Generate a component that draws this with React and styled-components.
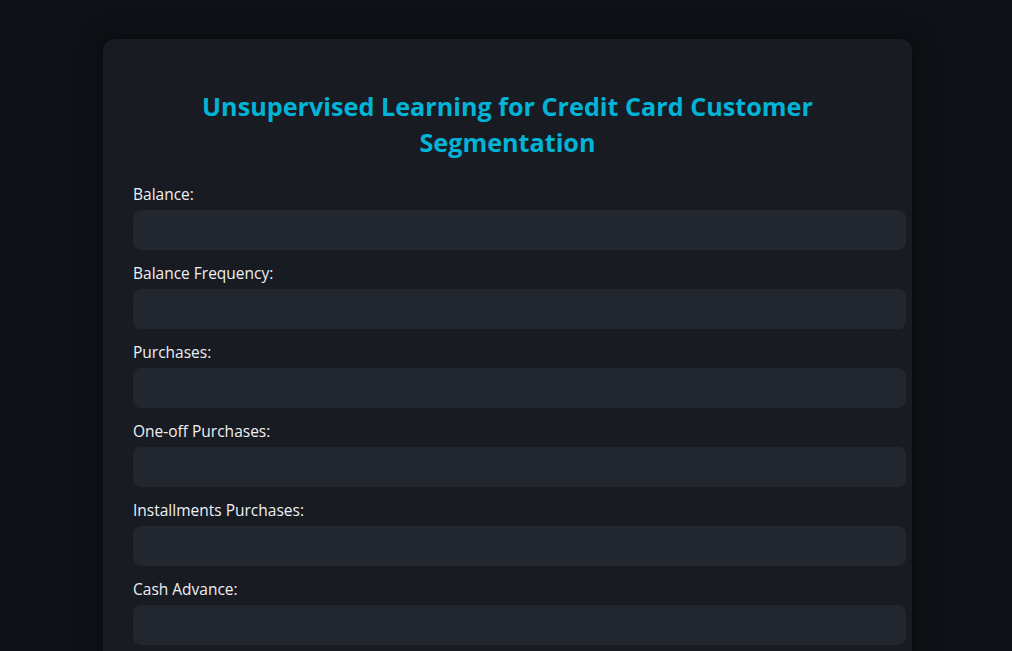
import React from 'react';
import styled, { createGlobalStyle } from 'styled-components';

const GlobalStyle = createGlobalStyle`
  html, body {
    margin: 0;
    padding: 0;
    background: #0f1117;
    font-family: 'Open Sans', 'Noto Sans', 'Liberation Sans', sans-serif;
  }
`;

const Page = styled.div`
  min-height: 100vh;
  padding: 39px 0 40px 3px;
  box-sizing: border-box;
`;

const Card = styled.div`
  width: 749px;
  margin: 0 auto;
  padding: 30px;
  background: #181b22;
  border-radius: 12px;
  box-shadow: 0 0 24px rgba(0, 0, 0, 0.55);
`;

const Title = styled.h1`
  margin: 19px 0 24px;
  text-align: center;
  color: #00b4d8;
  font-size: 25.2px;
  line-height: 36px;
  font-weight: 700;
`;

const Field = styled.div`
  margin-bottom: 13px;
`;

const Label = styled.label`
  display: block;
  color: #eef0f4;
  font-size: 15.5px;
  line-height: 20px;
  margin-bottom: 6px;
`;

const Input = styled.input`
  display: block;
  width: 100%;
  height: 16px;
  padding: 12px;
  border: none;
  border-radius: 8px;
  background: #22262e;
  color: #e6e8ec;
  font-size: 15px;
  outline: none;
`;

const fields = [
  'Balance',
  'Balance Frequency',
  'Purchases',
  'One-off Purchases',
  'Installments Purchases',
  'Cash Advance',
];

function App() {
  return (
    <Page>
      <GlobalStyle />
      <Card>
        <Title>Unsupervised Learning for Credit Card Customer Segmentation</Title>
        {fields.map((f) => (
          <Field key={f}>
            <Label>{f}:</Label>
            <Input type="text" />
          </Field>
        ))}
      </Card>
    </Page>
  );
}

export default App;
